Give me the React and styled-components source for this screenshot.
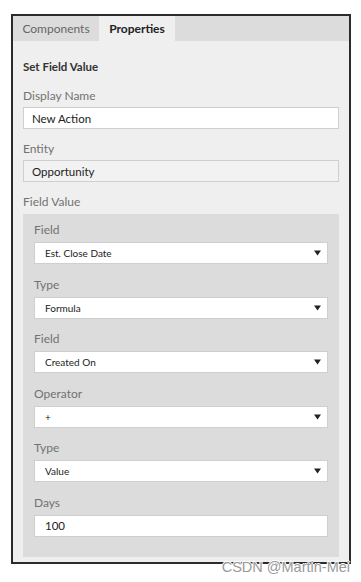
import React from "react";
import styled, { createGlobalStyle } from "styled-components";

const GlobalStyle = createGlobalStyle`
  body {
    margin: 0;
    background: #fff;
    font-family: "Lato", "Open Sans", sans-serif;
  }
`;

const Page = styled.div`
  position: relative;
  width: 361px;
  height: 582px;
  padding: 14px 0 0 11px;
  box-sizing: border-box;
`;

const Frame = styled.div`
  width: 340px;
  height: 550px;
  box-sizing: border-box;
  border: 2px solid #2b2b2b;
  background: #efefef;
  display: flex;
  flex-direction: column;
`;

const TabBar = styled.div`
  display: flex;
  height: 25px;
  background: #dcdcdc;
  flex-shrink: 0;
`;

const Tab = styled.div`
  width: ${(p) => p.width}px;
  display: flex;
  align-items: center;
  justify-content: center;
  font-size: 12px;
  color: ${(p) => (p.active ? "#222" : "#666")};
  font-weight: ${(p) => (p.active ? 700 : 400)};
  background: ${(p) => (p.active ? "#efefef" : "transparent")};
`;

const Body = styled.div`
  padding: 18px 10px 4px 10px;
  display: flex;
  flex-direction: column;
  flex: 1;
`;

const Title = styled.div`
  font-size: 11.5px;
  font-weight: 700;
  line-height: 16px;
  color: #333;
  margin-bottom: 13px;
`;

const Label = styled.div`
  font-size: 12px;
  line-height: 16px;
  color: #727272;
  margin-bottom: ${(p) => p.gap ?? 3}px;
`;

const TextBox = styled.div`
  height: 22px;
  box-sizing: border-box;
  border: 1px solid #cfcfcf;
  background: ${(p) => (p.readOnly ? "#f2f2f2" : "#fff")};
  display: flex;
  align-items: center;
  padding-left: 8px;
  font-size: 11.5px;
  color: #222;
  margin-bottom: 12px;
`;

const Panel = styled.div`
  background: #dcdcdc;
  padding: 8px 11px 20px 11px;
  display: flex;
  flex-direction: column;
  gap: 12.6px;
`;

const Group = styled.div`
  display: flex;
  flex-direction: column;
`;

const SelectBox = styled.div`
  height: 22px;
  box-sizing: border-box;
  border: 1px solid #cfcfcf;
  background: #fff;
  display: flex;
  align-items: center;
  justify-content: space-between;
  padding: 0 6px 0 10px;
  font-size: ${(p) => (p.input ? "11.5px" : "10px")};
  color: #222;
`;

const Watermark = styled.div`
  position: absolute;
  right: 11px;
  top: 559px;
  font-family: "Liberation Sans", Arial, sans-serif;
  font-size: 14.5px;
  color: #9a9a9a;
  text-shadow: -1px 0 #fff, 1px 0 #fff, 0 -1px #fff, 0 1px #fff;
`;

const Arrow = () => (
  <svg width="7" height="6" viewBox="0 0 7 6">
    <path d="M0 0.5 L7 0.5 L3.5 5.5 Z" fill="#222" />
  </svg>
);

const fields = [
  { label: "Field", value: "Est. Close Date" },
  { label: "Type", value: "Formula" },
  { label: "Field", value: "Created On" },
  { label: "Operator", value: "+" },
  { label: "Type", value: "Value" },
  { label: "Days", value: "100", input: true },
];

export default function App() {
  return (
    <>
      <GlobalStyle />
      <Page>
        <Frame>
          <TabBar>
            <Tab width={86}>Components</Tab>
            <Tab width={76} active>
              Properties
            </Tab>
          </TabBar>
          <Body>
            <Title>Set Field Value</Title>
            <Label>Display Name</Label>
            <TextBox>New Action</TextBox>
            <Label>Entity</Label>
            <TextBox readOnly>Opportunity</TextBox>
            <Label gap={4}>Field Value</Label>
            <Panel>
              {fields.map((f, i) => (
                <Group key={i}>
                  <Label gap={4}>{f.label}</Label>
                  <SelectBox input={f.input}>
                    <span>{f.value}</span>
                    {!f.input && <Arrow />}
                  </SelectBox>
                </Group>
              ))}
            </Panel>
          </Body>
        </Frame>
        <Watermark>CSDN @Martin-Mei</Watermark>
      </Page>
    </>
  );
}
